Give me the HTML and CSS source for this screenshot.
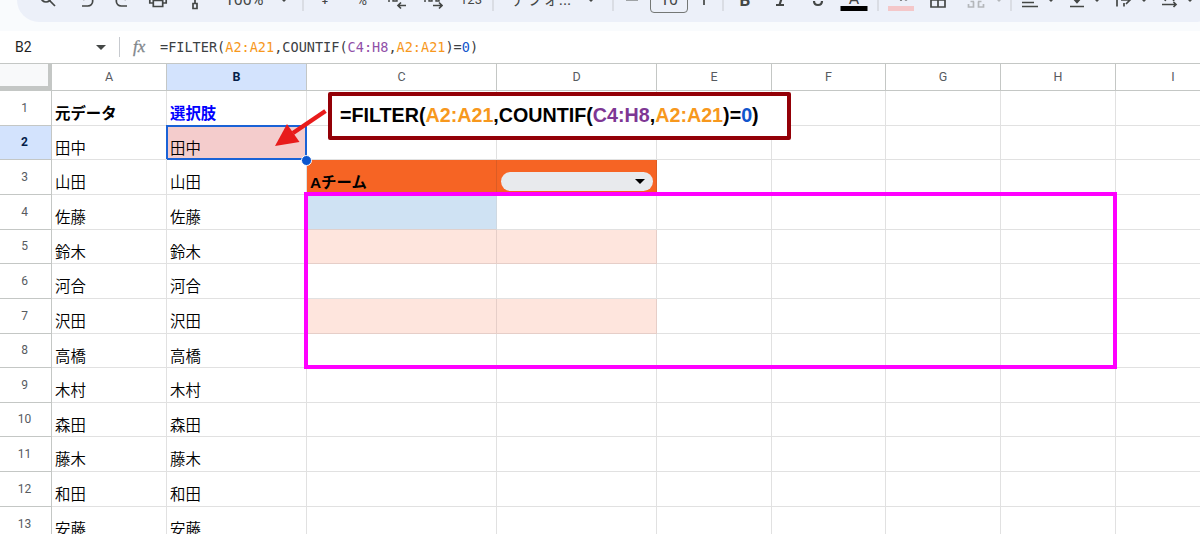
FILE: index.html
```
<!DOCTYPE html>
<html lang="ja">
<head>
<meta charset="utf-8">
<title>Spreadsheet</title>
<link rel="stylesheet" href="styles.css">
</head>
<body>
<div class="app">
  <div class="toolbar">
    <svg class="ic" viewBox="-10 -10 20 20"><circle cx="-2" cy="-3" r="5"/><path d="M1.500 .5L7 6"/></svg>
    <svg class="ic" viewBox="-10 -10 20 20"><path d="M-5 6H.8A4.900 4.900 0 0 0 .8-3.800H-6M-2.500-8L-6.500-4L-2.500 0"/></svg>
    <svg class="ic" viewBox="-10 -10 20 20"><path d="M5 6H-.8A4.900 4.900 0 0 1-.8-3.800H6M2.500-8L6.500-4L2.500 0"/></svg>
    <svg class="ic" viewBox="-10 -10 20 20"><path d="M-5 3H-8.200V-4H8.200V3H5M-5-4V-8H5V-4M-4.700 .5H4.700V6.500H-4.700Z"/></svg>
    <svg class="ic" viewBox="-10 -10 20 20"><path d="M-7-9H5V-5H-7ZM5-7H8V-1H0V3M-2 3.500H2V8.500H-2Z"/></svg>
    <span class="lbl">100%</span>
    <i class="caret"></i>
    <i class="div"></i>
    <span class="lbl yen">¥</span>
    <span class="lbl pct">%</span>
    <svg class="ic" viewBox="-10 -10 20 20"><path class="dots" d="M-9 1H-7M-4-6V1H0V-6Z"/><path d="M9 5.500H1M4 2.500L1 5.500L4 8.500"/></svg>
    <svg class="ic" viewBox="-10 -10 20 20"><path class="dots" d="M-9 1H-7M-4-6V1H-1V-6ZM3-6V1H6V-6Z"/><path d="M0 5.500H9M6 2.500L9 5.500L6 8.500"/></svg>
    <span class="lbl num">123</span>
    <i class="div"></i>
    <span class="lbl font">デフォ...</span>
    <i class="caret"></i>
    <i class="div"></i>
    <svg class="ic thin" viewBox="-10 -10 20 20"><path d="M-6 .2H6"/></svg>
    <span class="size">10</span>
    <svg class="ic" viewBox="-10 -10 20 20"><path d="M-6-1.500H6M0-7V5"/></svg>
    <i class="div"></i>
    <b class="lbl bold">B</b>
    <svg class="ic" viewBox="-10 -10 20 20"><path class="heavy" d="M-4 5H4M-1-6H6M-.5 5L3-6"/></svg>
    <svg class="ic" viewBox="-10 -10 20 20"><path class="heavy" d="M-4 1Q-4 5 0 5Q4 5 4 1M-4-4Q-3-7 0-7Q3-7 4-4"/></svg>
    <span class="lbl color">A</span>
    <i class="div"></i>
    <span class="fill"><svg class="ic" viewBox="-10 -10 20 20"><path d="M-6-4L0-9L6-4L0 1Z"/><circle class="drop" cx="5" cy="0" r="1.600"/></svg></span>
    <svg class="ic" viewBox="-10 -10 20 20"><path d="M-7-7H7V7H-7ZM0-7V7M-7 0H7"/></svg>
    <svg class="ic off" viewBox="-10 -10 20 20"><path d="M-7.500 4V7H-2.500V1.500M-5.500 1.500H-2M7.500 4V7H2.500V1.500M5.500 1.500H2M-8-3V-7H8V-3"/></svg>
    <i class="caret off"></i>
    <i class="div"></i>
    <svg class="ic" viewBox="-10 -10 20 20"><path d="M-8-6H8M-8-2H8M-8 2.500H4M-8 6.500H8"/></svg>
    <i class="caret"></i>
    <svg class="ic" viewBox="-10 -10 20 20"><path d="M-7 6.500H7M0-8V2M-4-2L0 2.500L4-2"/></svg>
    <i class="caret"></i>
    <svg class="ic" viewBox="-10 -10 20 20"><path d="M-6-8V6.500M1-8V-3M1 3V6.500M-2 0H7M3-4L7 0L3 4"/></svg>
    <i class="caret"></i>
    <svg class="ic" viewBox="-10 -10 20 20"><path d="M-8 4.500H6M3.500 2L6 4.500L3.500 7M-5 1L-1-8L4 1"/></svg>
    <i class="caret"></i>
  </div>

  <div class="formula-bar">
    <span class="name">B2</span>
    <i class="caret"></i>
    <i class="div"></i>
    <span class="fx">fx</span>
    <span class="formula">=FILTER(<span class="o">A2:A21</span>,COUNTIF(<span class="p">C4:H8</span>,<span class="o">A2:A21</span>)=<span class="n">0</span>)</span>
  </div>

  <div class="sheet">
    <div class="row head"><div class="corner"></div><div>A</div><div class="sel">B</div><div>C</div><div>D</div><div>E</div><div>F</div><div>G</div><div>H</div><div>I</div></div>
    <div class="row"><div class="rn">1</div><div class="strong">元データ</div><div class="strong blue">選択肢</div><div></div><div></div><div></div><div></div><div></div><div></div><div></div></div>
    <div class="row short"><div class="rn sel">2</div><div>田中</div><div class="active">田中</div><div></div><div></div><div></div><div></div><div></div><div></div><div></div></div>
    <div class="row"><div class="rn">3</div><div>山田</div><div>山田</div><div class="orange strong">Aチーム</div><div class="orange"><span class="chip"><i class="caret"></i></span></div><div></div><div></div><div></div><div></div><div></div></div>
    <div class="row"><div class="rn">4</div><div>佐藤</div><div>佐藤</div><div class="sky"></div><div></div><div></div><div></div><div></div><div></div><div></div></div>
    <div class="row short"><div class="rn">5</div><div>鈴木</div><div>鈴木</div><div class="peach"></div><div class="peach"></div><div></div><div></div><div></div><div></div><div></div></div>
    <div class="row"><div class="rn">6</div><div>河合</div><div>河合</div><div></div><div></div><div></div><div></div><div></div><div></div><div></div></div>
    <div class="row"><div class="rn">7</div><div>沢田</div><div>沢田</div><div class="peach"></div><div class="peach"></div><div></div><div></div><div></div><div></div><div></div></div>
    <div class="row short"><div class="rn">8</div><div>高橋</div><div>高橋</div><div></div><div></div><div></div><div></div><div></div><div></div><div></div></div>
    <div class="row"><div class="rn">9</div><div>木村</div><div>木村</div><div></div><div></div><div></div><div></div><div></div><div></div><div></div></div>
    <div class="row short"><div class="rn">10</div><div>森田</div><div>森田</div><div></div><div></div><div></div><div></div><div></div><div></div><div></div></div>
    <div class="row"><div class="rn">11</div><div>藤木</div><div>藤木</div><div></div><div></div><div></div><div></div><div></div><div></div><div></div></div>
    <div class="row"><div class="rn">12</div><div>和田</div><div>和田</div><div></div><div></div><div></div><div></div><div></div><div></div><div></div></div>
    <div class="row"><div class="rn">13</div><div>安藤</div><div>安藤</div><div></div><div></div><div></div><div></div><div></div><div></div><div></div></div>
  </div>

  <div class="range"></div>
  <div class="handle"></div>
  <div class="callout">=FILTER(<span class="o">A2:A21</span>,COUNTIF(<span class="p">C4:H8</span>,<span class="o">A2:A21</span>)=<span class="n">0</span>)</div>
  <svg class="arrow" viewBox="0 0 56 42"><path d="M50.500 5L18 27" stroke="#e81b1b" stroke-width="4.500"/><path d="M0 40L12 18L24.500 36Z" fill="#e81b1b"/></svg>
</div>
</body>
</html>
```
FILE: styles.css
```
body { margin: 0; }
.app {
  position: relative;
  width: 1200px;
  height: 534px;
  overflow: hidden;
  background: #f9fbfd;
  font-family: Roboto, "Noto Sans CJK JP", sans-serif;
  color: #444746;
}

/* Toolbar: every grid column starts at the centre of its item */
.toolbar {
  box-sizing: border-box;
  width: 1200px;
  height: 44px;
  margin: -22px 0 9px 17px;
  padding-left: 31px;
  border-radius: 22px;
  background: #ecf0f9;
  display: grid;
  grid-template-columns: 39px 35px 36px 37px 49px 40px 19px 22px 37px 35px 36px 38px 22px 48px 50px 22px 19px 37px 35px 19px 22px 35px 38px 36px 24px 23px 37px 38px 23px 12px 19px 21px 26px 20px 26px 21px 26px 20px 20px;
  align-items: center;
  justify-items: start;
}
.toolbar > * { transform: translateX(-50%); white-space: nowrap; }
.ic { width: 20px; height: 20px; display: block; fill: none; stroke: #444746; stroke-width: 1.7; }
.ic .dots { stroke-width: 1.4; }
.ic .heavy { stroke-width: 2.2; }
.ic .drop { fill: #444746; stroke: none; }
.ic.off { stroke: #b4b7bb; }
.ic.thin { stroke: #8d9092; stroke-width: 1.2; }
.lbl { font-size: 16px; line-height: 20px; }
.yen { font-size: 13px; }
.pct { font-size: 14px; }
.num { font-size: 13px; }
.font { font-size: 16px; }
.bold { font-size: 17px; }
.caret {
  width: 0;
  height: 0;
  border: 5px solid transparent;
  border-top-color: #444746;
  border-bottom-width: 0;
}
.toolbar .caret { border-width: 4px 4px 0; }
.toolbar .caret.off { border-top-color: #b4b7bb; }
.div { width: 1px; height: 22px; background: #c7cacf; }
.size {
  box-sizing: border-box;
  width: 38px;
  height: 26px;
  border: 1px solid #747775;
  border-radius: 4px;
  font-size: 16px;
  line-height: 23px;
  text-align: center;
}
.color, .fill { box-sizing: border-box; height: 22px; }
.color { width: 27px; line-height: 19px; border-bottom: 5px solid #000; text-align: center; }
.fill { width: 26px; border-bottom: 5px solid #f4c7c9; display: flex; justify-content: center; }

/* Formula bar */
.formula-bar { height: 32px; background: #fff; display: flex; align-items: center; }
.name { width: 81px; padding-left: 15px; font-size: 14px; color: #1f1f1f; }
.formula-bar .div { height: 20px; margin: 0 13px; }
.fx { width: 27px; font: italic 17px "Liberation Serif", serif; color: #80868b; -webkit-text-stroke: .3px #80868b; }
.formula { font: 13.56px "DejaVu Sans Mono", monospace; color: #3c4043; white-space: nowrap; }
.o { color: #f7981d; }
.p { color: #7e3794; }
.formula .p { color: #9150a8; }
.n { color: #1155cc; }

/* Sheet */
.sheet { background: #fff; border-top: 1px solid #c4c7c5; }
.row {
  display: grid;
  grid-template-columns: 52px 115px 140px 190px 160px 115px 114px 115px 115px 115px;
  height: 35px;
}
.row.short { height: 34px; }
.row > div {
  box-sizing: border-box;
  border-right: 1px solid #e1e1e1;
  border-bottom: 1px solid #e1e1e1;
  padding: 0 0 2px 3px;
  display: flex;
  align-items: flex-end;
  font: 350 15.4px/22px "Noto Sans CJK JP", sans-serif;
  color: #000;
}
.row.short > div { padding-bottom: 1px; }
.row.head { height: 27px; }
.row.head > div, .row > .rn {
  font: 12px/16px Roboto, sans-serif;
  color: #575b5f;
  align-items: center;
  justify-content: center;
  padding: 0;
  border-color: #c4c7c5;
}
.row.head > div { font-size: 12.5px; }
.row > .rn { padding-bottom: 1px; padding-right: 2px; }
.row > div.sel, .row.head > div.sel { background: #d3e3fd; color: #041e49; font-weight: 700; }
.row.head > .corner { background: #f8f9fa; border-right: 4px solid #c4c7c5; border-bottom: 5px solid #c4c7c5; }
.row > .strong { padding-bottom: 0; font-weight: 700; font-family: "Liberation Sans", "Noto Sans CJK JP", sans-serif; }
.row > .blue { color: #00f; }
.row > .active { background: #f4cccc; box-shadow: -1px -1px 0 0 #1a62d6, inset 1px 1px 0 0 #1a62d6, inset -1px -1px 0 0 #1a62d6; border-color: #1a62d6; }
.row > .orange { background: #f66424; border-color: #dc5c24; }
.row > .sky { background: #cfe2f3; border-color: #cfe2f3 #cfd9e2 #e0d0cc #cfd9e2; }
.row > .peach { background: #fee5dd; border-color: #e6cec8; }
.chip {
  box-sizing: border-box;
  width: 152px;
  height: 19px;
  margin: 0 0 1px 1px;
  padding-right: 8px;
  border-radius: 10px;
  background: #e8eaed;
  display: flex;
  align-items: center;
  justify-content: flex-end;
}
.chip .caret { border-top-color: #000; }

/* Annotations over the grid */
.range { position: absolute; box-sizing: border-box; left: 304px; top: 192px; width: 813px; height: 177px; border: 4px solid #f0f; }
.handle { position: absolute; left: 301px; top: 155px; width: 9px; height: 9px; border: 1px solid #fff; border-radius: 50%; background: #0b57d0; }
.callout {
  position: absolute;
  box-sizing: border-box;
  left: 328px;
  top: 92px;
  width: 463px;
  height: 48px;
  padding-left: 8px;
  border: 4px solid #930007;
  border-radius: 2px;
  background: #fff;
  font: bold 19.7px/38px "Liberation Sans", sans-serif;
  color: #000;
  white-space: nowrap;
}
.arrow { position: absolute; left: 275px; top: 106px; width: 56px; height: 42px; }
```
